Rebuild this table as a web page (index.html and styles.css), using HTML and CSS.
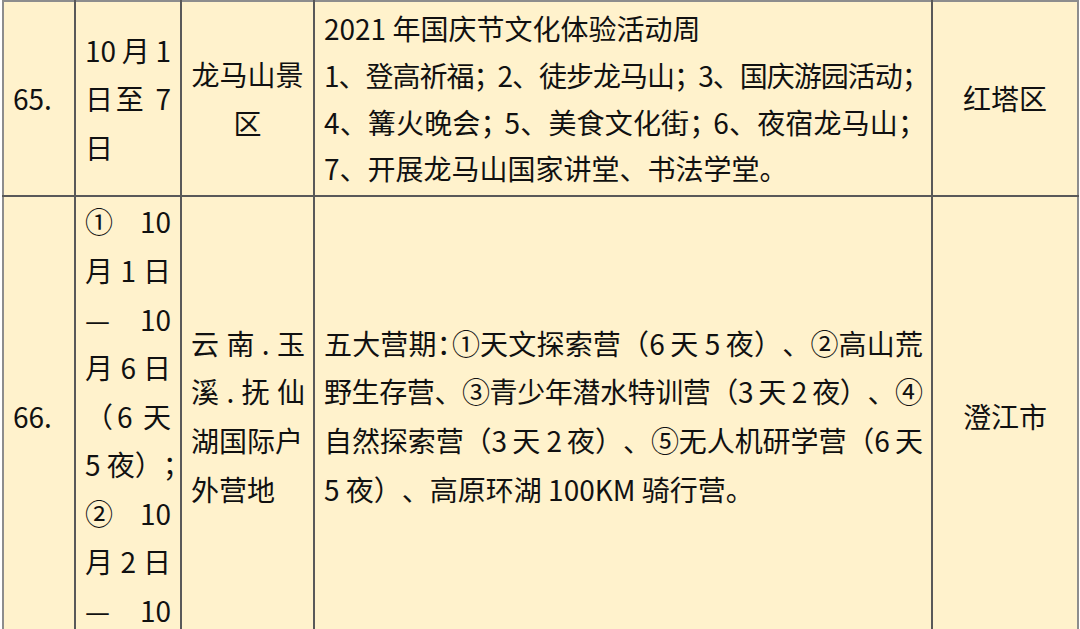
FILE: index.html
```html
<!DOCTYPE html>
<html lang="zh-CN">
<head>
<meta charset="utf-8">
<title>国庆活动表</title>
<link rel="stylesheet" href="styles.css">
</head>
<body>
<div class="sheet">
  <table class="grid">
    <colgroup>
      <col class="c-num">
      <col class="c-date">
      <col class="c-place">
      <col class="c-desc">
      <col class="c-area">
    </colgroup>
    <tbody>
      <tr class="r65">
        <td class="num">65.</td>
        <td class="date">
          <span class="jl">10月1</span>
          <span class="jl">日至 7</span>
          <span class="ll">日</span>
        </td>
        <td class="place center">
          <span class="ll">龙马山景</span>
          <span class="ll">区</span>
        </td>
        <td class="desc tight">
          <span class="ll">2021 年国庆节文化体验活动周</span>
          <span class="jl">1、登高祈福<span class="pc">；</span>2、徒步龙马山<span class="pc">；</span>3、国庆游园活动<span class="pc">；</span></span>
          <span class="jl">4、篝火晚会<span class="pc">；</span>5、美食文化街<span class="pc">；</span>6、夜宿龙马山<span class="pc">；</span></span>
          <span class="ll">7、开展龙马山国家讲堂、书法学堂。</span>
        </td>
        <td class="area">红塔区</td>
      </tr>
      <tr class="r66">
        <td class="num">66.</td>
        <td class="date top">
          <span class="jl">① 10</span>
          <span class="jl">月 1 日</span>
          <span class="jl"><span class="dash-box">—</span> 10</span>
          <span class="jl">月 6 日</span>
          <span class="jl">（6 天</span>
          <span class="jl">5 夜）；</span>
          <span class="jl">② 10</span>
          <span class="jl">月 2 日</span>
          <span class="jl"><span class="dash-box">—</span> 10</span>
        </td>
        <td class="place">
          <span class="jl">云南.玉</span>
          <span class="jl">溪.抚仙</span>
          <span class="ll">湖国际户</span>
          <span class="ll">外营地</span>
        </td>
        <td class="desc">
          <span class="jl">五大营期<span class="pc2">：</span>①天文探索营（6 天 5 夜）、②高山荒</span>
          <span class="jl">野生存营、③青少年潜水特训营（3 天 2 夜）、④</span>
          <span class="jl">自然探索营（3 天 2 夜）、⑤无人机研学营（6 天</span>
          <span class="ll">5 夜）、高原环湖 100KM 骑行营。</span>
        </td>
        <td class="area">澄江市</td>
      </tr>
    </tbody>
  </table>
</div>
</body>
</html>
```

FILE: styles.css
```css
html, body {
  margin: 0;
  padding: 0;
  background: #ffffff;
}

.sheet {
  padding: 0 2px 0 2px;
}

.grid {
  border-collapse: collapse;
  table-layout: fixed;
  width: 1075px;
  background: #fff2cc;
  font-family: "Noto Sans CJK SC", "Noto Sans", sans-serif;
  font-size: 28px;
  line-height: 48.6px;
  color: #111111;
  text-spacing-trim: space-all;
  border-top: 2px solid #8d8d8d;
  border-left: 2px solid #8d8d8d;
  border-right: 2px solid #8d8d8d;
}

.c-num { width: 72px; }
.c-date { width: 106px; }
.c-place { width: 133px; }
.c-desc { width: 618px; }
.c-area { width: 146px; }

.grid td {
  border: 2px solid #595959;
  padding: 0 9px;
  vertical-align: middle;
  text-align: left;
}

.grid tr:first-child td {
  border-top: 2px solid #8d8d8d;
}

.grid td:first-child {
  border-left: 2px solid #8d8d8d;
}

.grid td:last-child {
  border-right: 2px solid #8d8d8d;
}

.r65 { height: 195px; }
.r66 { height: 440px; }

.num {
  padding-left: 8px;
}

.grid td.area { text-align: center; }

.jl {
  display: block;
  text-align: justify;
  text-align-last: justify;
  white-space: nowrap;
}

.ll {
  display: block;
  white-space: nowrap;
}

.desc .jl {
  letter-spacing: -1px;
}

.pc {
  letter-spacing: -4px;
}

.pc2 {
  letter-spacing: -14px;
}

.place .jl {
  letter-spacing: -1px;
}

.center .ll {
  text-align: center;
}

.tight {
  line-height: 46.7px;
}

.dash-box {
  display: inline-block;
  width: 30px;
  text-align: left;
  text-align-last: left;
}

.top {
  vertical-align: top;
}
```
